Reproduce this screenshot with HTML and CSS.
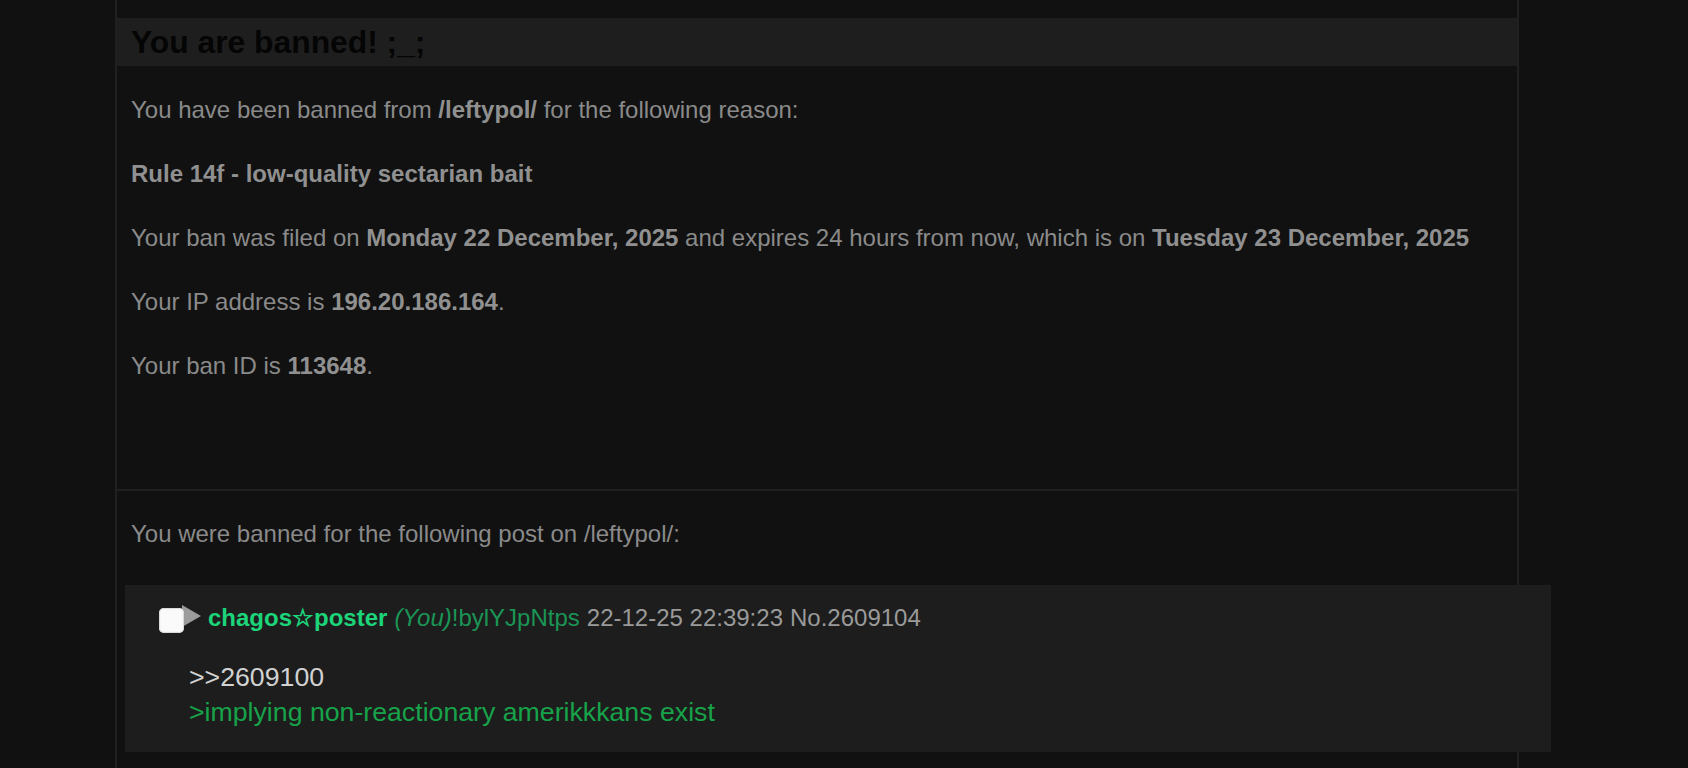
FILE: index.html
```html
<!DOCTYPE html>
<html>
<head>
<meta charset="utf-8">
<title>Banned</title>
<link rel="stylesheet" href="styles.css">
</head>
<body>
<div class="page">
  <div class="ban-box">
    <h2 class="ban-title">You are banned! ;_;</h2>
    <div class="ban-info">
      <p>You have been banned from <b>/leftypol/</b> for the following reason:</p>
      <p><b>Rule 14f - low-quality sectarian bait</b></p>
      <p>Your ban was filed on <b>Monday 22 December, 2025</b> and expires 24 hours from now, which is on <b>Tuesday 23 December, 2025</b></p>
      <p>Your IP address is <b>196.20.186.164</b>.</p>
      <p>Your ban ID is <b>113648</b>.</p>
    </div>
    <div class="ban-post">
      <p class="ban-post-label">You were banned for the following post on /leftypol/:</p>
      <div class="post">
        <div class="post-intro">
          <span class="post-check"></span>
          <span class="post-arrow"></span>
          <span class="post-name">chagos☆poster</span>
          <span class="post-you">(You)</span><span class="post-trip">!bylYJpNtps</span>
          <span class="post-time">22-12-25 22:39:23</span>
          <span class="post-no">No.2609104</span>
        </div>
        <div class="post-body">
          <div class="quote-link">&gt;&gt;2609100</div>
          <div class="greentext">&gt;implying non-reactionary amerikkkans exist</div>
        </div>
      </div>
    </div>
  </div>
</div>
</body>
</html>
```

FILE: styles.css
```css
html, body {
  margin: 0;
  padding: 0;
  background: #111111;
  height: 100%;
}

body {
  font-family: "Liberation Sans", Arial, Helvetica, sans-serif;
  color: #8a8a8a;
  overflow: hidden;
}

.page {
  padding-left: 115px;
}

.ban-box {
  width: 1400px;
  min-height: 768px;
  border-left: 2px solid #202020;
  border-right: 2px solid #202020;
  padding-top: 18px;
  box-sizing: content-box;
}

.ban-title {
  margin: 0;
  height: 48px;
  line-height: 48px;
  padding-left: 14px;
  background: #1e1e1e;
  color: #050505;
  font-size: 31.8px;
  font-weight: bold;
}

.ban-info {
  display: flex;
  flex-direction: column;
  gap: 36px;
  padding: 30px 14px 109px;
}

.ban-info p,
.ban-post-label {
  margin: 0;
  font-size: 24px;
  line-height: 28px;
}

.ban-info b {
  color: #909090;
}

.ban-post {
  border-top: 2px solid #202020;
  padding-top: 29px;
}

.ban-post-label {
  padding-left: 14px;
  margin-bottom: 37px;
}

.post {
  margin-left: 8px;
  margin-right: -34px;
  height: 167px;
  box-sizing: border-box;
  background: #1d1d1d;
  padding: 19px 0 0 34px;
  position: relative;
}

.post-intro {
  display: flex;
  align-items: center;
  height: 28px;
  font-size: 24px;
  line-height: 28px;
  white-space: pre;
}

.post-check {
  position: relative;
  z-index: 1;
  width: 25px;
  height: 25px;
  margin-top: 4px;
  border-radius: 5px;
  background: #fafafa;
  box-shadow: inset 0 0 1px 1px #d8d8d8;
  flex: none;
}

.post-arrow {
  width: 0;
  height: 0;
  margin-left: -2px;
  margin-top: -4px;
  border-top: 11.5px solid transparent;
  border-bottom: 11.5px solid transparent;
  border-left: 19px solid #9c9c9c;
  flex: none;
}

.post-name {
  margin-left: 7px;
  color: #1cd479;
  font-weight: bold;
}

.post-you {
  margin-left: 7px;
  color: #1b9555;
  font-style: italic;
}

.post-trip {
  color: #1b9555;
}

.post-time {
  margin-left: 7px;
  color: #9a9a9a;
}

.post-no {
  margin-left: 7px;
  color: #9a9a9a;
}

.post-body {
  margin-left: 30px;
  margin-top: 27.5px;
  font-size: 26.7px;
  line-height: 35px;
}

.quote-link {
  color: #d2d2d2;
}

.greentext {
  color: #17a34a;
}
```
